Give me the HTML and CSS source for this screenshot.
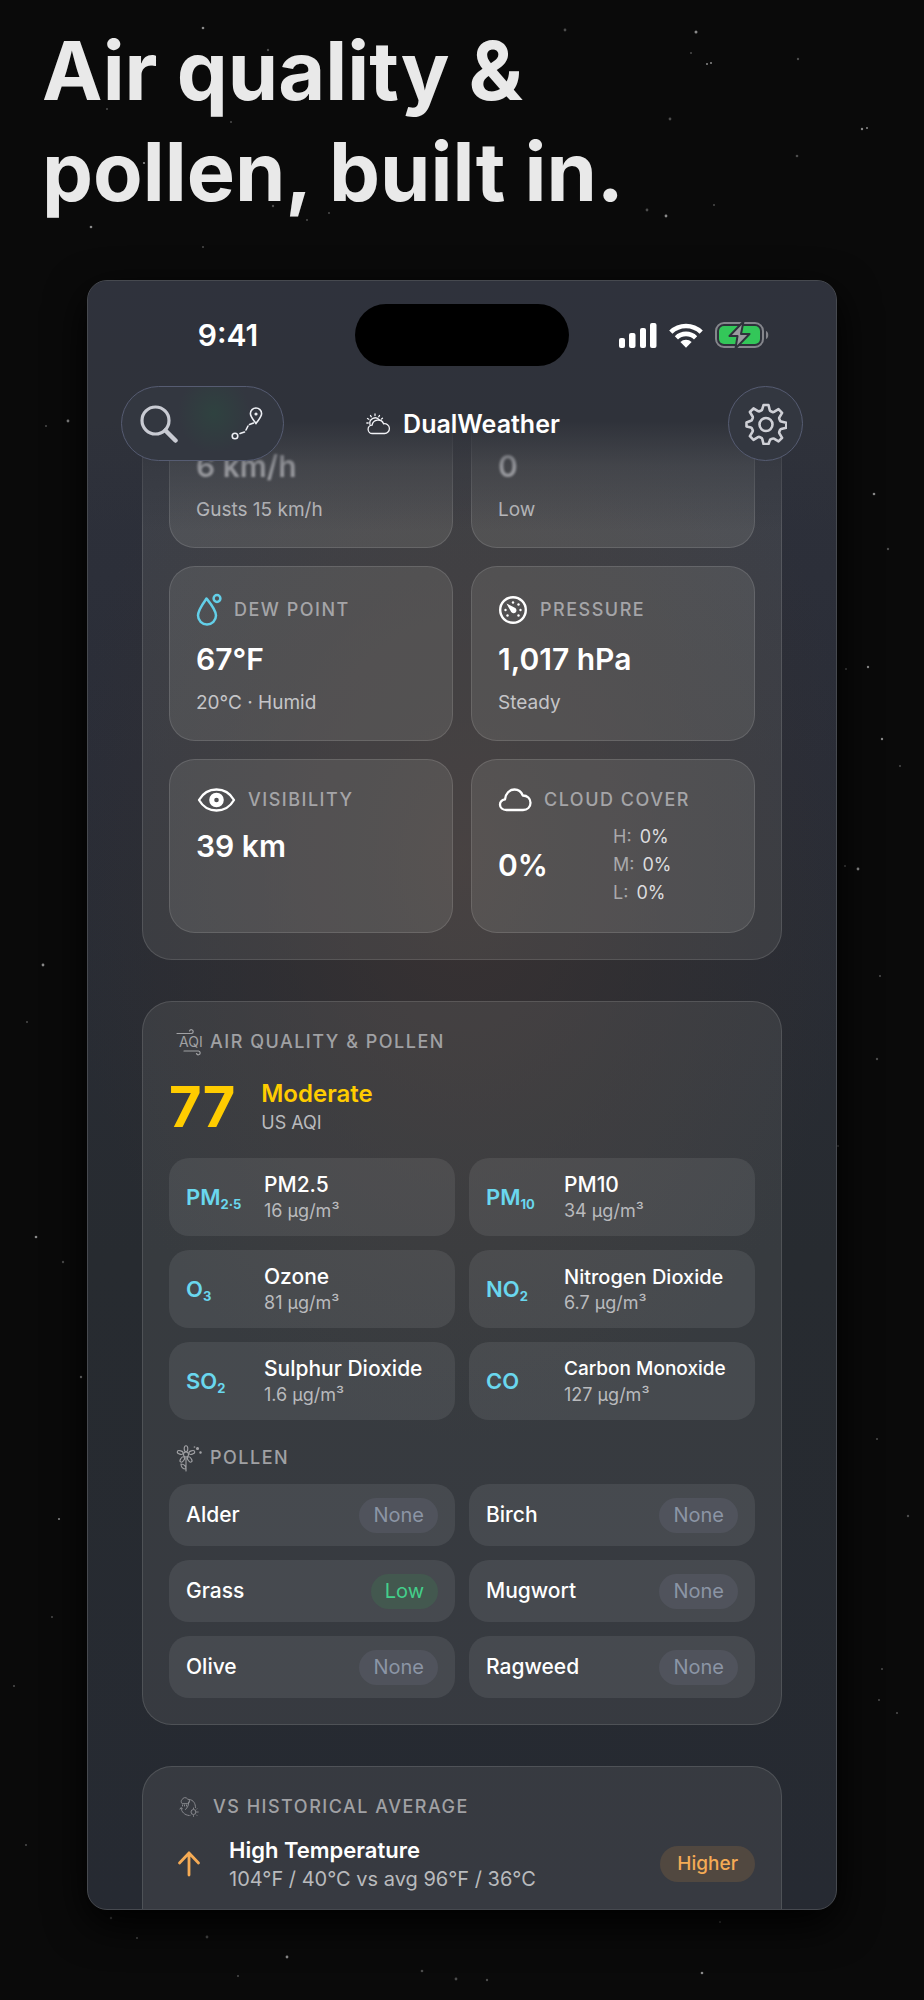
FILE: index.html
```html
<!DOCTYPE html>
<html lang="en">
<head>
  <meta charset="UTF-8">
  <meta name="viewport" content="width=device-width, initial-scale=1.0">
  <title>DualWeather - Air quality &amp; pollen</title>
  <link rel="stylesheet" href="styles.css">
</head>
<body>

  <svg class="stars" viewBox="0 0 924 2000" preserveAspectRatio="xMidYMin slice" aria-hidden="true">
    <g fill="#8a8a8a">
      <circle cx="203" cy="28" r="1.3"/><circle cx="696" cy="32" r="1.5"/><circle cx="707" cy="64" r="1"/><circle cx="711" cy="63" r="1"/>
      <circle cx="862" cy="129" r="1.2"/><circle cx="867" cy="128" r="1"/><circle cx="666" cy="216" r="1.4"/><circle cx="91" cy="227" r="1.3"/>
      <circle cx="287" cy="1957" r="1.4"/><circle cx="702" cy="1973" r="1.3"/><circle cx="43" cy="965" r="1.4"/><circle cx="68" cy="421" r="1.4"/>
      <circle cx="874" cy="494" r="1.3"/><circle cx="868" cy="667" r="1.2"/><circle cx="858" cy="869" r="1.4"/><circle cx="36" cy="1237" r="1.3"/>
      <circle cx="59" cy="1519" r="1.1"/><circle cx="882" cy="739" r="1.2"/><circle cx="81" cy="1377" r="1.2"/><circle cx="144" cy="163" r="1.1"/>
    </g>
    <g fill="#4c4c4c">
      <circle cx="565" cy="30" r="1.4"/><circle cx="691" cy="53" r="1"/><circle cx="798" cy="59" r="1.2"/><circle cx="670" cy="119" r="1.4"/>
      <circle cx="797" cy="156" r="1.3"/><circle cx="647" cy="210" r="1.4"/><circle cx="714" cy="205" r="1"/><circle cx="273" cy="206" r="1.2"/>
      <circle cx="307" cy="220" r="1"/><circle cx="329" cy="213" r="1"/><circle cx="268" cy="50" r="1.2"/><circle cx="107" cy="109" r="1"/>
      <circle cx="231" cy="122" r="1"/><circle cx="203" cy="247" r="1"/><circle cx="111" cy="1918" r="1.2"/><circle cx="137" cy="1938" r="1.1"/>
      <circle cx="207" cy="1937" r="1.4"/><circle cx="422" cy="1971" r="1.3"/><circle cx="456" cy="1979" r="1.4"/><circle cx="487" cy="1980" r="1.2"/>
      <circle cx="238" cy="1976" r="1"/><circle cx="720" cy="1922" r="1"/><circle cx="27" cy="1022" r="1"/><circle cx="46" cy="426" r="1"/>
      <circle cx="63" cy="1262" r="1.2"/><circle cx="52" cy="1617" r="1"/><circle cx="14" cy="1686" r="1.1"/><circle cx="26" cy="1845" r="1"/>
      <circle cx="888" cy="549" r="1.2"/><circle cx="846" cy="669" r="1"/><circle cx="900" cy="766" r="1"/><circle cx="845" cy="866" r="1"/>
      <circle cx="880" cy="976" r="1.1"/><circle cx="877" cy="1059" r="1.2"/><circle cx="838" cy="1146" r="1"/><circle cx="877" cy="1439" r="1"/>
      <circle cx="908" cy="1516" r="1.2"/><circle cx="882" cy="1669" r="1"/><circle cx="897" cy="1713" r="1.1"/><circle cx="879" cy="1700" r="1"/>
    </g>
  </svg>

  <h1>Air quality &amp;<br>pollen, built in.</h1>

  <main class="phone">

    <div class="topbar">
      <div class="status">
        <span class="time">9:41</span>
        <span class="island"></span>
        <span class="status-icons">
          <svg width="38" height="25" viewBox="0 0 38 25" fill="#fff" aria-hidden="true">
            <rect x="0" y="15" width="6" height="10" rx="2"/>
            <rect x="10" y="10" width="6.500" height="15" rx="2"/>
            <rect x="21" y="5" width="6" height="20" rx="2"/>
            <rect x="31" y="0" width="6.500" height="25" rx="2"/>
          </svg>
          <svg width="34" height="25" viewBox="0 0 34 25" aria-hidden="true">
            <g fill="none" stroke="#fff" stroke-width="4.600">
              <path d="M1.800 9.200a21.800 21.800 0 0 1 30.400 0"/>
              <path d="M7.400 14.800a13.800 13.800 0 0 1 19.200 0"/>
            </g>
            <path fill="#fff" d="M11.400 19a8 8 0 0 1 11.200 0L17 24.800z"/>
          </svg>
          <svg width="54" height="26" viewBox="0 0 54 26" aria-hidden="true">
            <rect x="1" y="1" width="47" height="24" rx="8" fill="none" stroke="#85868c" stroke-width="2"/>
            <rect x="4" y="4" width="41" height="18" rx="5" fill="#33c759"/>
            <path d="M51 9c3 1 3 7 0 8z" fill="#85868c"/>
            <path d="M28.500-.5L14.500 14h8L20.500 26.500 34.500 12h-8.500z" fill="#9a9b9f" stroke="#2f323b" stroke-width="2" stroke-linejoin="round"/>
          </svg>
        </span>
      </div>

      <nav class="navbar">
        <div class="pill">
          <button type="button" aria-label="Search">
            <svg width="38" height="38" viewBox="0 0 38 38" fill="none" stroke="#c9cbd3" stroke-width="3.200" stroke-linecap="round">
              <circle cx="15.500" cy="15.500" r="13.500"/>
              <path d="M25.500 25.500l10 10" stroke-width="4.500"/>
            </svg>
          </button>
          <button type="button" aria-label="Route">
            <svg width="32" height="34" viewBox="0 0 32 34" fill="none" stroke="#eceef3" stroke-width="1.600" stroke-linecap="round">
              <path d="M25 16.500c-3-4-5.600-6.700-5.600-9.900a5.600 5.600 0 0 1 11.200 0c0 3.200-2.600 5.900-5.600 9.900z"/>
              <circle cx="25" cy="7" r=".8" fill="#eceef3"/>
              <circle cx="4" cy="29" r="2.800"/>
              <path d="M9 26.500l4.500-1.500M15 23l2-4M18.500 17.500l4-1.500"/>
            </svg>
          </button>
        </div>

        <div class="brand">
          <svg width="25" height="22" viewBox="0 0 25 22" fill="none" stroke="#f1f2f6" stroke-width="1.300" stroke-linecap="round" aria-hidden="true">
            <path d="M6.500 20.500a4.200 4.200 0 0 1-.4-8.400 6 6 0 0 1 11.500-1.300 4.900 4.900 0 1 1 .6 9.700z"/>
            <path d="M4 11.500a5.300 5.300 0 0 1 9.500-4.300"/>
            <path d="M9 1v1.500M4.500 2.500l.8 1.300M13.500 2.500l-.8 1.300M1.500 5.500l1.300.8M.8 10h1.400M16.500 5.200l-1 .8"/>
          </svg>
          <span>DualWeather</span>
        </div>

        <button type="button" class="round" aria-label="Settings">
          <svg width="42" height="42" viewBox="0 0 42 42" fill="none" stroke="#cfd0d6" stroke-width="2.600" stroke-linejoin="round">
            <path d="M18.500 2h5l1.300 5.200q.2.800 1 1.100l1.700.7q.8.300 1.500-.1l4.500-2.700 3.600 3.600-2.700 4.500q-.4.700-.1 1.500l.7 1.700q.3.800 1.100 1l5.200 1.300v5l-5.200 1.300q-.8.200-1.100 1l-.7 1.700q-.3.800.1 1.500l2.700 4.500-3.600 3.600-4.500-2.700q-.7-.4-1.500-.1l-1.700.7q-.8.300-1 1.100L23.500 41h-5l-1.300-5.200q-.2-.8-1-1.100l-1.700-.7q-.8-.3-1.500.1l-4.500 2.700-3.600-3.600 2.700-4.500q.4-.7.100-1.500l-.7-1.700q-.3-.8-1.100-1L1.500 23.500v-4l4.400-1.800q.8-.2 1.100-1l.7-1.700q.3-.8-.1-1.500l-2.700-4.500 3.600-3.600 4.500 2.700q.7.400 1.500.1l1.700-.7q.8-.3 1-1.100z"/>
            <circle cx="21" cy="21.500" r="6.500"/>
          </svg>
        </button>
      </nav>
    </div>

    <div class="content">

      <section class="panel panel-details">
        <div class="grid">
          <article class="card card-first">
            <p class="value scrolled">6 km/h</p>
            <p class="note">Gusts 15 km/h</p>
          </article>
          <article class="card card-first">
            <p class="value scrolled">0</p>
            <p class="note">Low</p>
          </article>

          <article class="card">
            <h3 class="card-label">
              <svg width="26" height="34" viewBox="0 0 26 34" fill="none" stroke="#63cfe8" stroke-width="2.500" stroke-linejoin="round" aria-hidden="true">
                <path d="M10.500 5.500C7 10.500 2 17 2 22.600a9 9 0 0 0 18 0c0-5.600-5.500-12.100-9.500-17.100z"/>
                <circle cx="21" cy="5.500" r="3.400"/>
              </svg>
              Dew Point
            </h3>
            <p class="value">67°F</p>
            <p class="note">20°C · Humid</p>
          </article>
          <article class="card">
            <h3 class="card-label">
              <svg width="30" height="34" viewBox="0 -2 30 34" aria-hidden="true">
                <circle cx="15" cy="15" r="12.800" fill="none" stroke="#fff" stroke-width="2.400"/>
                <g fill="#fff">
                  <circle cx="15" cy="7.500" r="1.200"/><circle cx="20.500" cy="9.500" r="1.200"/>
                  <circle cx="7.500" cy="15" r="1.200"/><circle cx="22.500" cy="15" r="1.200"/>
                  <circle cx="9.500" cy="20.500" r="1.200"/><circle cx="20.500" cy="20.500" r="1.200"/>
                  <path d="M8.500 8.500l8.800 4.600a2.900 2.900 0 1 1-4.100 4z"/>
                </g>
              </svg>
              Pressure
            </h3>
            <p class="value">1,017 hPa</p>
            <p class="note">Steady</p>
          </article>

          <article class="card">
            <h3 class="card-label">
              <svg width="40" height="26" viewBox="0 0 40 26" fill="none" aria-hidden="true">
                <path d="M3 13C7 6 13.500 2.500 20.500 2.500S34 6 38 13c-4 7-10.500 10.500-17.500 10.500S7 20 3 13z" stroke="#fff" stroke-width="2.300" stroke-linejoin="round"/>
                <circle cx="20.500" cy="13" r="4.800" stroke="#fff" stroke-width="5"/>
              </svg>
              Visibility
            </h3>
            <p class="value">39 km</p>
          </article>
          <article class="card">
            <h3 class="card-label tight">
              <svg width="34" height="26" viewBox="0 0 34 26" fill="none" stroke="#fff" stroke-width="2.300" stroke-linejoin="round" aria-hidden="true">
                <path d="M8.500 23C4.500 23 2 20.700 2 17.700c0-3 2.200-4.800 5-5.300C7.500 6.500 11.500 2.500 16.500 2.500c4 0 6.800 2.200 8.300 6 4.500 0 7.700 3 7.700 7.200 0 4.400-3.200 7.300-7.500 7.300z"/>
              </svg>
              Cloud Cover
            </h3>
            <div class="cloud">
              <p class="value">0%</p>
              <ul class="levels">
                <li><span>H:</span> 0%</li>
                <li><span>M:</span> 0%</li>
                <li><span>L:</span> 0%</li>
              </ul>
            </div>
          </article>
        </div>
      </section>

      <section class="panel">
        <h2 class="section-label">
          <svg class="aqi-icon" width="27" height="27" viewBox="0 0 27 27" fill="none" stroke="#a0a1a4" stroke-width="1.200" stroke-linecap="round" aria-hidden="true">
            <path d="M1 4.500h14.500a1.900 1.900 0 1 0-2-2.600M8 22h14.500a1.900 1.900 0 1 1-2 2.600"/>
            <text x="3" y="18">AQI</text>
          </svg>
          Air Quality &amp; Pollen
        </h2>

        <div class="aqi">
          <strong class="aqi-number">77</strong>
          <div>
            <p class="aqi-level">Moderate</p>
            <p class="aqi-scale">US AQI</p>
          </div>
        </div>

        <div class="tiles">
          <div class="tile">
            <span class="symbol">PM<sub>2·5</sub></span>
            <div><h3>PM2.5</h3><p>16 μg/m³</p></div>
          </div>
          <div class="tile">
            <span class="symbol">PM<sub>10</sub></span>
            <div><h3>PM10</h3><p>34 μg/m³</p></div>
          </div>
          <div class="tile">
            <span class="symbol">O<sub>3</sub></span>
            <div><h3>Ozone</h3><p>81 μg/m³</p></div>
          </div>
          <div class="tile">
            <span class="symbol">NO<sub>2</sub></span>
            <div><h3 class="long">Nitrogen Dioxide</h3><p>6.7 μg/m³</p></div>
          </div>
          <div class="tile">
            <span class="symbol">SO<sub>2</sub></span>
            <div><h3>Sulphur Dioxide</h3><p>1.6 μg/m³</p></div>
          </div>
          <div class="tile">
            <span class="symbol">CO</span>
            <div><h3 class="longer">Carbon Monoxide</h3><p>127 μg/m³</p></div>
          </div>
        </div>

        <h2 class="section-label pollen-label">
          <svg width="27" height="27" viewBox="0 0 27 27" fill="none" stroke="#a0a1a4" stroke-width="1.100" stroke-linecap="round" aria-hidden="true">
            <circle cx="10" cy="9.500" r="2.500"/>
            <ellipse cx="10" cy="3.800" rx="1.800" ry="3"/>
            <ellipse cx="4.200" cy="7.500" rx="1.700" ry="3" transform="rotate(-72 4.200 7.500)"/>
            <ellipse cx="15.800" cy="7.500" rx="1.700" ry="3" transform="rotate(72 15.800 7.500)"/>
            <ellipse cx="6.300" cy="14.500" rx="1.700" ry="3" transform="rotate(36 6.300 14.500)"/>
            <ellipse cx="13.700" cy="14.500" rx="1.700" ry="3" transform="rotate(-36 13.700 14.500)"/>
            <path d="M10 12.500V26M10 24c-3.500 0-5-2-5-5 3 0 5 2 5 5"/>
            <circle cx="21.500" cy="3.500" r="1" fill="#a0a1a4"/><circle cx="24.500" cy="7.500" r=".7" fill="#a0a1a4"/><circle cx="18.500" cy="2" r=".3"/>
          </svg>
          Pollen
        </h2>

        <div class="tiles">
          <div class="tile pollen"><h3>Alder</h3><span class="badge">None</span></div>
          <div class="tile pollen"><h3>Birch</h3><span class="badge">None</span></div>
          <div class="tile pollen"><h3>Grass</h3><span class="badge low">Low</span></div>
          <div class="tile pollen"><h3>Mugwort</h3><span class="badge">None</span></div>
          <div class="tile pollen"><h3>Olive</h3><span class="badge">None</span></div>
          <div class="tile pollen"><h3>Ragweed</h3><span class="badge">None</span></div>
        </div>
      </section>

      <section class="panel panel-history">
        <h2 class="section-label history-label">
          <svg width="20" height="20" viewBox="0 0 20 20" fill="none" stroke="#8f9195" stroke-width=".9" stroke-linecap="round" aria-hidden="true">
            <path d="M3 6.500a2.500 2.500 0 0 1 .2-4A3 3 0 0 1 8.500 2a2.300 2.300 0 0 1 .5 4.500zM3.500 8v1M5.500 8v1M7.500 8v1"/>
            <path d="M10.500 2.500c4 .5 6 4 6 8M2 11c.5 4 3.500 7 8 7.500M1 12l1-1.300 1.400 1"/>
            <path d="M9.500 5c.5 3-1 5.500-3 7.500"/>
            <circle cx="14.500" cy="15" r="2.500"/>
            <path d="M14.500 11v.6M14.500 18.600v.8M18.500 15h.7M17.500 12.200l.4-.4M17.500 18l.4.400M11.500 18l-.4.400"/>
          </svg>
          vs Historical Average
        </h2>

        <div class="history">
          <svg width="24" height="26" viewBox="0 0 24 26" fill="none" stroke="#f5ab55" stroke-width="2.800" stroke-linecap="round" stroke-linejoin="round" aria-hidden="true">
            <path d="M12 24V2M2.500 12L12 2l9.500 10"/>
          </svg>
          <div class="history-text">
            <h3>High Temperature</h3>
            <p>104°F / 40°C vs avg 96°F / 36°C</p>
          </div>
          <span class="badge higher">Higher</span>
        </div>
      </section>

    </div>
  </main>

</body>
</html>
```
FILE: styles.css
```css
* {
  box-sizing: border-box;
}

body {
  margin: 0;
  position: relative;
  padding: 21px 0 90px;
  font-family: Inter, "Liberation Sans", sans-serif;
  background-color: #0a0a0a;
  color: #fff;
}

h1, h2, h3, p, ul {
  margin: 0;
  padding: 0;
}

svg {
  display: block;
  flex-shrink: 0;
}

button {
  padding: 0;
  border: none;
  background: none;
  cursor: pointer;
}

/* starfield behind everything */
.stars {
  position: absolute;
  top: 0;
  left: 0;
  width: 100%;
  height: 100%;
}

h1 {
  position: relative;
  padding-left: 42px;
  margin-bottom: 57px;
  font-size: 81px;
  line-height: 101px;
  font-weight: 700;
  color: #e9e9e9;
}

/* phone */
.phone {
  position: relative;
  overflow: hidden;
  margin: 0 87px;
  border: 1px solid #46494f;
  border-radius: 20px;
  background:
    radial-gradient(ellipse 400px 580px at 50% 580px, rgba(62, 52, 50, 0.75), rgba(54, 49, 49, 0.5) 50%, rgba(44, 44, 48, 0) 100%),
    linear-gradient(#2f323c, #2a2d37 30%, #272b30 60%, #262a32);
  box-shadow: 0 14px 40px #000;
}

.topbar {
  position: absolute;
  top: 0;
  left: 0;
  right: 0;
  z-index: 2;
  height: 250px;
  padding-top: 23px;
  background: linear-gradient(#2f323c, #2f323a 56%, rgba(47, 50, 58, 0.4) 74%, rgba(47, 50, 58, 0));
}

.status {
  display: grid;
  grid-template-columns: 1fr 214px 1fr;
  align-items: center;
}

.time {
  justify-self: center;
  padding-left: 13px;
  font-size: 30px;
  line-height: 36px;
  font-weight: 600;
}

.island {
  height: 62px;
  border-radius: 31px;
  background-color: #000;
}

.status-icons {
  display: flex;
  align-items: center;
  gap: 12px;
  padding-left: 50px;
}

.navbar {
  display: flex;
  align-items: center;
  justify-content: space-between;
  margin-top: 20px;
  padding: 0 33px;
}

.pill, .round {
  display: flex;
  align-items: center;
  height: 75px;
  border: 1px solid #565c72;
  border-radius: 38px;
  background-color: #333740;
}

/* the pill is wider than the settings button, the margin keeps the title centred */
.pill {
  justify-content: space-between;
  width: 163px;
  margin-right: -86px;
  padding: 0 20px 0 18px;
  background: radial-gradient(ellipse 36px 40px at 92px 26px, #2f4240, rgba(51, 55, 64, 0)), #333740;
}

.round {
  justify-content: center;
  width: 75px;
}

.brand {
  display: flex;
  align-items: center;
  gap: 12px;
  font-size: 25px;
  line-height: 30px;
  font-weight: 600;
}

.content {
  padding: 0 54px;
}

/* panels */
.panel {
  margin-bottom: 41px;
  padding: 26px;
  border: 1px solid rgba(255, 255, 255, 0.12);
  border-radius: 30px;
  background-color: rgba(255, 252, 246, 0.08);
}

.panel-details {
  padding-top: 92px;
  border-top: none;
  border-radius: 0 0 30px 30px;
}

.panel-history {
  margin-bottom: 0;
  padding-bottom: 16px;
  border-bottom: none;
  border-radius: 30px 30px 0 0;
}

.grid, .tiles {
  display: grid;
  grid-template-columns: 1fr 1fr;
}

.grid {
  gap: 18px;
}

.card {
  padding: 26px 26px 25px;
  border: 1px solid rgba(255, 255, 255, 0.12);
  border-radius: 26px;
  background-color: rgba(255, 252, 248, 0.09);
}

.card-first {
  padding-top: 74px;
}

.card-label, .section-label {
  display: flex;
  align-items: center;
  font-size: 18px;
  line-height: 28px;
  font-weight: 500;
  letter-spacing: 1.5px;
  text-transform: uppercase;
  color: #a5a5a8;
}

.card-label {
  gap: 12px;
  min-height: 28px;
  margin-bottom: 14px;
}

.card-label.tight {
  margin-bottom: 9px;
}

.value {
  font-size: 30px;
  line-height: 36px;
  font-weight: 600;
}

/* half hidden under the blurred top bar */
.scrolled {
  color: #d0d0d3;
  filter: blur(1px);
}

.note {
  margin-top: 14px;
  font-size: 19px;
  line-height: 24px;
  color: #c5c5c8;
}

.cloud {
  display: grid;
  grid-template-columns: 1fr 1fr;
  align-items: center;
}

.levels {
  list-style: none;
  font-size: 18px;
  line-height: 28px;
  color: #dcdcde;
}

.levels span {
  margin-right: 3px;
  color: #a9a9ab;
}

/* air quality */
.section-label {
  gap: 7px;
  padding-left: 7px;
  color: #a0a1a4;
}

.aqi-icon text {
  font-size: 14px;
  font-weight: 400;
  letter-spacing: 0;
  fill: #a0a1a4;
  stroke: none;
}

.aqi {
  display: flex;
  align-items: center;
  gap: 26px;
  margin: 16px 0;
  line-height: 70px;
}

.aqi-number {
  font-size: 56px;
  font-weight: 700;
}

.aqi-number, .aqi-level {
  color: #ffcc00;
}

.aqi-level {
  font-size: 24px;
  line-height: 32px;
  font-weight: 600;
}

.aqi-scale {
  font-size: 18px;
  line-height: 26px;
  color: #b9babd;
}

.tiles {
  gap: 14px;
}

.tile {
  display: flex;
  align-items: center;
  min-height: 78px;
  padding: 0 17px;
  border-radius: 20px;
  background-color: rgba(255, 255, 255, 0.08);
}

.tile h3 {
  font-size: 21px;
  line-height: 28px;
  font-weight: 500;
}

.tile h3.long {
  font-size: 20px;
}

.tile h3.longer {
  font-size: 19px;
}

.tile p {
  font-size: 18px;
  line-height: 24px;
  color: #b9babd;
}

.symbol {
  width: 78px;
  font-size: 22px;
  font-weight: 600;
  color: #6ad7ee;
}

.symbol sub {
  font-size: 13px;
  line-height: 0;
  font-weight: 700;
  vertical-align: -4px;
}

.pollen-label {
  margin: 24px 0 12px;
}

.tile.pollen {
  justify-content: space-between;
  min-height: 62px;
}

.badge {
  padding: 0 14px;
  border-radius: 18px;
  font-size: 20px;
  line-height: 35px;
  color: #8b95a5;
  background-color: #50535c;
}

.badge.low {
  color: #43cf8b;
  background-color: #43584f;
}

.badge.higher {
  padding: 0 17px;
  font-size: 19px;
  line-height: 36px;
  font-weight: 500;
  color: #f5ab55;
  background-color: #514840;
}

/* history */
.history-label {
  gap: 14px;
  padding-left: 10px;
}

.history {
  display: flex;
  align-items: center;
  margin-top: 14px;
  padding-left: 8px;
}

.history-text {
  flex: 1;
  padding-left: 28px;
}

.history-text h3 {
  font-size: 22px;
  line-height: 30px;
  font-weight: 600;
}

.history-text p {
  font-size: 20px;
  line-height: 28px;
  color: #b9babd;
}
```
